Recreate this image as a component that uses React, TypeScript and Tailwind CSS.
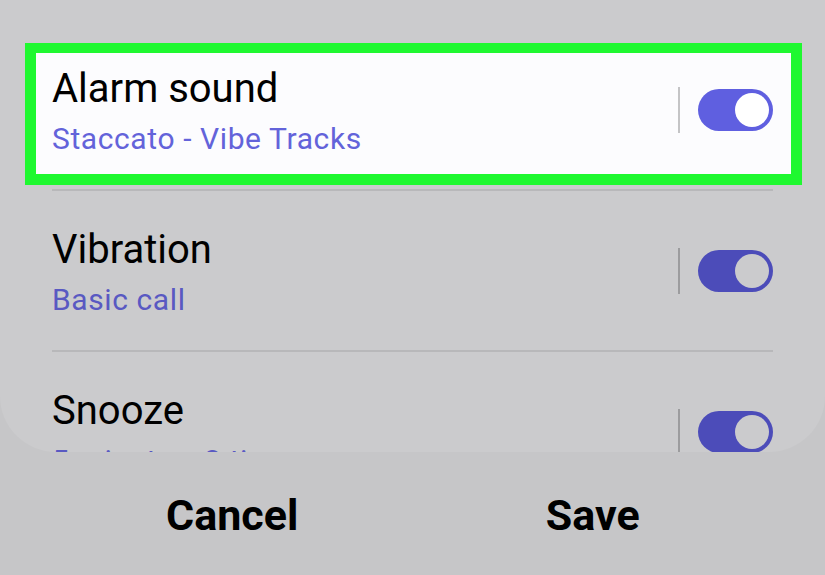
type RowProps = {
  title: string;
  subtitle: string;
  highlighted?: boolean;
};

function Toggle({ highlighted }: { highlighted?: boolean }) {
  return (
    <div
      className={`flex h-[42px] w-[75px] items-center justify-end rounded-full pr-[4px] ${
        highlighted ? 'bg-[#5f5fe0]' : 'bg-[#4c4cb9]'
      }`}
    >
      <div
        className={`h-[34px] w-[34px] rounded-full ${
          highlighted ? 'bg-white' : 'bg-[#cbcbcd]'
        }`}
      />
    </div>
  );
}

function SettingRow({ title, subtitle, highlighted }: RowProps) {
  return (
    <div className="flex items-start justify-between">
      <div className="flex flex-col">
        <span className="text-[40px] leading-[48px] text-black">{title}</span>
        <span
          className={`mt-[9px] text-[30px] leading-[34px] tracking-[0.6px] ${
            highlighted ? 'text-[#6363da]' : 'text-[#5959c2]'
          }`}
        >
          {subtitle}
        </span>
      </div>
      <div className="flex items-start gap-[18px] pt-[22px]">
        <div
          className={`h-[46px] w-[2px] ${highlighted ? 'bg-[#c4c4c6]' : 'bg-[#9c9c9e]'}`}
        />
        <div className="pt-[2px]">
          <Toggle highlighted={highlighted} />
        </div>
      </div>
    </div>
  );
}

export default function App() {
  return (
    <div
      className="flex h-[575px] w-[825px] flex-col overflow-hidden bg-[#c6c6c8]"
      style={{ fontFamily: 'Roboto, "Noto Sans", sans-serif' }}
    >
      {/* Sheet */}
      <div className="h-[452px] shrink-0 overflow-hidden rounded-b-[56px] bg-[#cbcbcd] pt-[43px]">
        {/* Highlighted row */}
        <div className="ml-[25px] mr-[23px] h-[142px] border-[11px] border-t-[10px] border-[#1ff830] bg-[#fcfcfe] pl-[16px] pr-[18px] pt-[12px]">
          <SettingRow title="Alarm sound" subtitle="Staccato - Vibe Tracks" highlighted />
        </div>

        <div className="mx-[52px] mt-[4px] h-[2px] bg-[#b8b8ba]" />

        <div className="mx-[52px] h-[159px] pt-[35px]">
          <SettingRow title="Vibration" subtitle="Basic call" />
        </div>

        <div className="mx-[52px] h-[2px] bg-[#b8b8ba]" />

        <div className="mx-[52px] pt-[35px]">
          <SettingRow title="Snooze" subtitle="5 minutes, 3 times" />
        </div>
      </div>

      {/* Buttons */}
      <div className="mx-[52px] grid grid-cols-2 pt-[37px]">
        <span className="text-center text-[43px] font-bold leading-[52px] text-black">Cancel</span>
        <span className="text-center text-[43px] font-bold leading-[52px] text-black">Save</span>
      </div>
    </div>
  );
}
